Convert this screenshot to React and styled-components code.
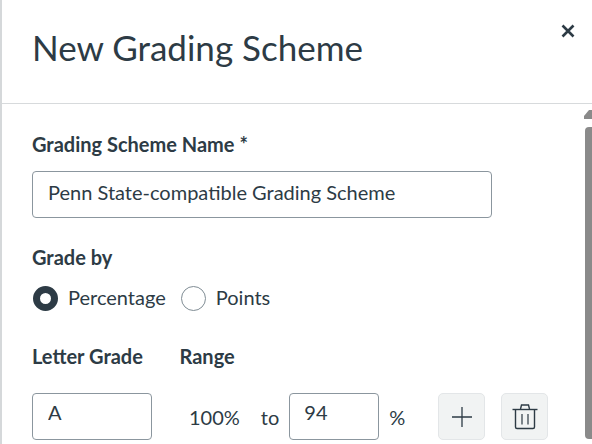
import React from 'react'
import styled, { createGlobalStyle } from 'styled-components'

const GlobalStyle = createGlobalStyle`
    html, body {
        margin: 0;
        padding: 0;
        background: #fff;
    }
    body {
        font-family: Lato, "Noto Sans", sans-serif;
        color: #2d3b45;
    }
`;

function App() {
    return (
        <>
        <GlobalStyle />
        <Modal>
            <Header>
                <Title>New Grading Scheme</Title>
                <CloseButton aria-label="Close">
                    <svg width="16" height="16" viewBox="0 0 16 16">
                        <path d="M2.5 2.5 L13.5 13.5 M13.5 2.5 L2.5 13.5" stroke="#2d3b45" strokeWidth="2.6" fill="none" />
                    </svg>
                </CloseButton>
            </Header>
            <Body>
                <Content>
                    <Label>Grading Scheme Name *</Label>
                    <NameInput readOnly value="Penn State-compatible Grading Scheme" />
                    <GradeBy>Grade by</GradeBy>
                    <RadioRow>
                        <RadioOption>
                            <RadioDot checked />
                            <RadioText>Percentage</RadioText>
                        </RadioOption>
                        <RadioOption>
                            <RadioDot />
                            <RadioText>Points</RadioText>
                        </RadioOption>
                    </RadioRow>
                    <ColumnHeads>
                        <LetterHead>Letter Grade</LetterHead>
                        <RangeHead>Range</RangeHead>
                    </ColumnHeads>
                    <GradeRow>
                        <LetterInput readOnly value="A" />
                        <RangeMax>100%</RangeMax>
                        <To>to</To>
                        <RangeInput readOnly value="94" />
                        <Percent>%</Percent>
                        <IconButton aria-label="Add">
                            <svg width="22" height="22" viewBox="0 0 22 22">
                                <path d="M11 1 V21 M1 11 H21" stroke="#2d3b45" strokeWidth="1.3" fill="none" />
                            </svg>
                        </IconButton>
                        <IconButton aria-label="Delete">
                            <svg width="26" height="26" viewBox="0 0 26 26" fill="none" stroke="#2d3b45">
                                <path d="M0.5 5.5 H25.5" strokeWidth="1.4" />
                                <path d="M8.5 5 L9.5 1 H16.5 L17.5 5" strokeWidth="1.4" />
                                <path d="M3.5 6 V23 Q3.5 24.5 5 24.5 H21 Q22.5 24.5 22.5 23 V6" strokeWidth="1.4" />
                                <path d="M10 10 V20.5 M16 10 V20.5" strokeWidth="1.2" />
                            </svg>
                        </IconButton>
                    </GradeRow>
                </Content>
                <Scrollbar>
                    <ArrowUp>
                        <svg width="8" height="9" viewBox="0 0 8 9">
                            <path d="M0 9 V6 L5 0 H8 V9 Z" fill="#8a8a8a" />
                        </svg>
                    </ArrowUp>
                    <Thumb />
                </Scrollbar>
            </Body>
        </Modal>
        </>
    )
}

const Modal = styled.div`
    width: 592px;
    height: 444px;
    box-sizing: border-box;
    border-left: 2px solid #d5d8da;
    background: #fff;
    display: flex;
    flex-direction: column;
    overflow: hidden;
`;
const Header = styled.div`
    height: 104px;
    flex: none;
    box-sizing: border-box;
    border-bottom: 1px solid #d7dadc;
    padding: 0 16px 0 30px;
    display: flex;
    justify-content: space-between;
    align-items: flex-start;
`;
const Title = styled.h2`
    margin: 26px 0 0;
    font-size: 35px;
    line-height: 42px;
    font-weight: 400;
    color: #2d3b45;
`;
const CloseButton = styled.button`
    margin-top: 23px;
    padding: 0;
    border: 0;
    background: none;
    width: 16px;
    height: 16px;
    display: block;
`;
const Body = styled.div`
    flex: 1;
    display: flex;
    min-height: 0;
`;
const Content = styled.div`
    flex: 1;
    padding: 28px 0 0 30px;
    min-width: 0;
`;
const Label = styled.div`
    font-size: 20px;
    line-height: 24px;
    font-weight: 700;
    color: #2d3b45;
`;
const Field = styled.input`
    box-sizing: border-box;
    display: block;
    height: 47px;
    border: 1px solid #8b969e;
    border-radius: 4px;
    background: #fff;
    font-family: inherit;
    font-size: 20px;
    color: #2d3b45;
    outline: none;
    padding: 0 15px 6px;
    margin: 0;
`;
const NameInput = styled(Field)`
    width: 460px;
    margin-top: 15px;
`;
const GradeBy = styled(Label)`
    margin-top: 27px;
`;
const RadioRow = styled.div`
    display: flex;
    align-items: center;
    gap: 15px;
    margin-top: 17px;
    padding-left: 1px;
`;
const RadioOption = styled.div`
    display: flex;
    align-items: center;
    gap: 10px;
`;
const RadioDot = styled.span`
    box-sizing: border-box;
    width: 25px;
    height: 25px;
    border-radius: 50%;
    background: #fff;
    border: ${(props) => (props.checked ? '7px solid #2d3b45' : '1px solid #7f8c94')};
`;
const RadioText = styled.span`
    font-size: 20px;
    line-height: 23px;
    margin-bottom: 2px;
    color: #2d3b45;
`;
const ColumnHeads = styled.div`
    display: flex;
    margin-top: 33px;
`;
const LetterHead = styled(Label)`
    width: 147.5px;
`;
const RangeHead = styled(Label)``;
const GradeRow = styled.div`
    display: flex;
    align-items: center;
    margin-top: 25px;
`;
const LetterInput = styled(Field)`
    width: 120px;
    padding-bottom: 9px;
`;
const RangeMax = styled.span`
    font-size: 20px;
    margin-left: 37px;
`;
const To = styled.span`
    font-size: 20px;
    margin-left: 21px;
`;
const RangeInput = styled(Field)`
    width: 90px;
    margin-left: 10px;
    padding-bottom: 9px;
    padding-left: 14px;
`;
const Percent = styled.span`
    font-size: 20px;
    margin-left: 10px;
    width: 49px;
`;
const IconButton = styled.button`
    box-sizing: border-box;
    width: 47px;
    height: 47px;
    margin-right: 16px;
    padding: 0;
    border: 1px solid #e3e6e8;
    border-radius: 5px;
    background: #f1f3f3;
    display: flex;
    align-items: center;
    justify-content: center;
`;
const Scrollbar = styled.div`
    width: 8px;
    flex: none;
    display: flex;
    flex-direction: column;
    align-items: flex-end;
    padding-top: 6px;
`;
const ArrowUp = styled.div`
    height: 9px;
    svg {
        display: block;
    }
`;
const Thumb = styled.div`
    width: 7px;
    height: 312px;
    margin-top: 8px;
    background: #8a8a8a;
    border-radius: 4px 0 0 4px;
`;

export default App;
